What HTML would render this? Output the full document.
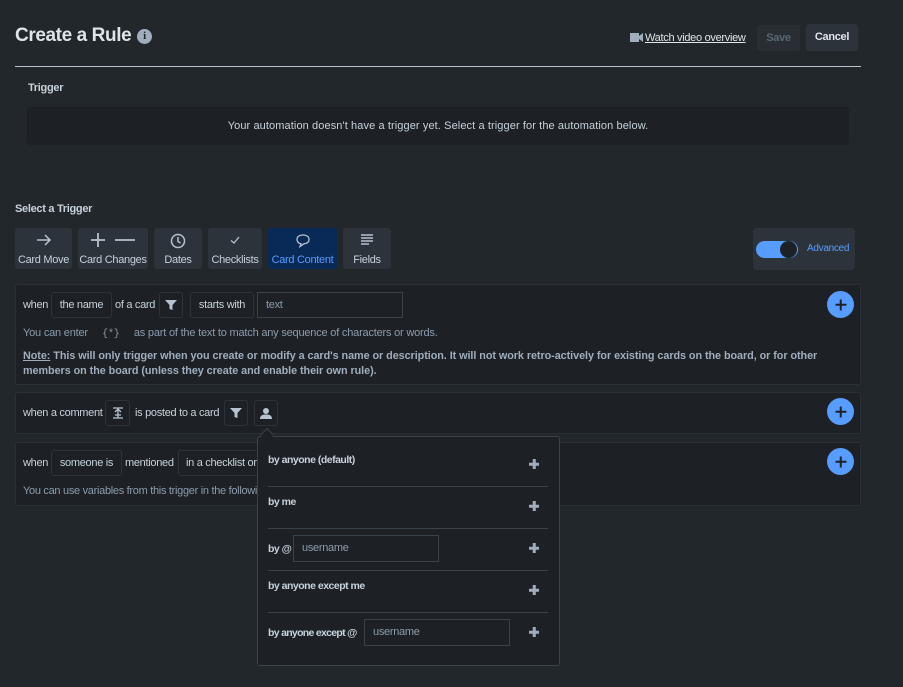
<!DOCTYPE html>
<html><head><meta charset="utf-8"><style>
*{box-sizing:border-box;margin:0;padding:0}
body{width:903px;height:687px;background:#22272b;font-family:"Liberation Sans",sans-serif;color:#b6c2cf;position:relative;overflow:hidden;font-size:11px;letter-spacing:-0.3px}
.a{position:absolute;white-space:nowrap}
.btn{position:absolute;background:#2c333a;border-radius:3px;color:#b6c2cf}
.box{position:absolute;background:#1d2125;border:1px solid #2a3036;border-radius:3px}
.chip{position:absolute;border:1px solid #2c333a;border-radius:3px;height:26px;line-height:24px;text-align:center;color:#c7d1db;font-size:11px;white-space:nowrap}
.t{position:absolute;color:#c7d1db;font-size:11px;white-space:nowrap}
.plus{position:absolute;width:27px;height:27px;border-radius:50%;background:#579dff}
.plus:before,.plus:after{content:"";position:absolute;background:#1d2125;left:50%;top:50%;transform:translate(-50%,-50%)}
.plus:before{width:11px;height:2.5px}.plus:after{width:2.5px;height:11px}
.sp{position:absolute;width:10px;height:10px}
.sp:before,.sp:after{content:"";position:absolute;background:#9fadbc;left:50%;top:50%;transform:translate(-50%,-50%)}
.sp:before{width:10px;height:2.5px}.sp:after{width:2.5px;height:10px}
.tb{position:absolute;top:228px;height:41px;background:#2c333a;border-radius:3px;text-align:center;font-size:11px;color:#c7d1db;white-space:nowrap}
.tb .l{position:absolute;bottom:3px;left:0;right:0}
.tb svg{position:absolute;top:5px;left:50%;transform:translateX(-50%)}
.inp{position:absolute;border:1px solid #3a424b;background:#1d2125;height:26px;line-height:24px;padding-left:8px;color:#8c9bab;font-size:11px}
.hr{position:absolute;left:268px;width:280px;height:1px;background:#3a424b}
.pb{position:absolute;left:268px;font-weight:bold;font-size:10.5px;color:#c7d1db;white-space:nowrap;letter-spacing:-0.5px}
</style></head><body>
<div class="a" style="left:15px;top:25px;font-size:19px;font-weight:bold;color:#dee4ea;letter-spacing:-0.4px">Create a Rule</div>
<div class="a" style="left:137px;top:29px;width:15px;height:15px;border-radius:50%;background:#9fadbc;color:#22272b;font-size:11px;font-weight:bold;text-align:center;line-height:15px;font-family:'Liberation Serif',serif">i</div>
<svg class="a" style="left:630px;top:33px" width="13" height="9"><rect x="0" y="0" width="9" height="9" fill="#9fadbc"/><path d="M9 3 L13 0 V9 L9 6Z" fill="#9fadbc"/></svg>
<div class="a" style="left:645px;top:32px;font-size:11px;color:#dee4ea;text-decoration:underline">Watch video overview</div>
<div class="btn" style="left:757px;top:25px;width:43px;height:26px;line-height:26px;text-align:center;color:#596773;font-weight:bold;font-size:11px;background:#282e33">Save</div>
<div class="btn" style="left:806px;top:24px;width:52px;height:27px;line-height:27px;text-align:center;color:#dee4ea;font-weight:bold;font-size:11px">Cancel</div>
<div class="a" style="left:15px;top:66px;width:846px;height:1px;background:#b6c2cf"></div>
<div class="a" style="left:28px;top:82px;font-weight:bold;font-size:11px;color:#c7d1db">Trigger</div>
<div class="a" style="left:27px;top:107px;width:822px;height:38px;background:#1d2125;border-radius:3px;text-align:center;line-height:38px;color:#c7d1db;font-size:11px;letter-spacing:0.1px">Your automation doesn't have a trigger yet. Select a trigger for the automation below.</div>
<div class="a" style="left:15px;top:203px;font-weight:bold;font-size:11px;color:#c7d1db">Select a Trigger</div>

<div class="tb" style="left:15px;width:57px"><svg width="16" height="14"><path d="M1 7H14M9 2L14 7L9 12" stroke="#b6c2cf" stroke-width="1.5" fill="none"/></svg><div class="l">Card Move</div></div>
<div class="tb" style="left:78px;width:70px"><svg width="48" height="14"><path d="M2 7H16M9 0V14M26 7H46" stroke="#b6c2cf" stroke-width="1.8" fill="none"/></svg><div class="l">Card Changes</div></div>
<div class="tb" style="left:154px;width:48px"><svg width="16" height="16"><circle cx="8" cy="8" r="6.5" stroke="#b6c2cf" stroke-width="1.5" fill="none"/><path d="M8 4V8.5L10.5 10" stroke="#b6c2cf" stroke-width="1.5" fill="none"/></svg><div class="l">Dates</div></div>
<div class="tb" style="left:208px;width:54px"><svg width="14" height="14"><path d="M3 7.5L6 10L11 4" stroke="#b6c2cf" stroke-width="1.3" fill="none"/></svg><div class="l">Checklists</div></div>
<div class="tb" style="left:268px;width:69px;background:#092957;color:#579dff"><svg width="16" height="15"><path d="M8 2C4 2 2 4 2 6.5C2 9 4 10.5 6 10.8L5 13.5L9 10.8C12 10.5 14 9 14 6.5C14 4 12 2 8 2Z" stroke="#b6c2cf" stroke-width="1.3" fill="none"/></svg><div class="l">Card Content</div></div>
<div class="tb" style="left:343px;width:48px"><svg width="16" height="14"><path d="M2 2H14M2 5H14M2 8H14M2 11H10" stroke="#b6c2cf" stroke-width="1.4" fill="none"/></svg><div class="l">Fields</div></div>

<div class="a" style="left:753px;top:228px;width:102px;height:42px;background:#2c333a;border-radius:3px"></div>
<div class="a" style="left:756px;top:241px;width:42px;height:17px;border-radius:9px;background:#579dff"></div>
<div class="a" style="left:780px;top:241px;width:17px;height:17px;border-radius:50%;background:#1d2125"></div>
<div class="a" style="left:807px;top:243px;color:#579dff;font-size:10px">Advanced</div>

<div class="box" style="left:15px;top:284px;width:846px;height:101px"></div>
<div class="t" style="left:23px;top:299px">when</div>
<div class="chip" style="left:51px;top:292px;width:61px">the name</div>
<div class="t" style="left:115px;top:299px">of a card</div>
<div class="chip" style="left:159px;top:292px;width:24px"><svg width="12" height="12" style="margin-top:6px"><path d="M0 1H12L7.5 6V11L4.5 10V6Z" fill="#b6c2cf"/></svg></div>
<div class="chip" style="left:190px;top:292px;width:64px">starts with</div>
<div class="inp" style="left:257px;top:292px;width:146px">text</div>
<div class="plus" style="left:827px;top:291px"></div>
<div class="t" style="left:23px;top:327px;color:#8c9bab;letter-spacing:-0.2px">You can enter &nbsp;&nbsp;&nbsp;&nbsp;<span style="font-family:'Liberation Mono',monospace;font-size:10px">{*}</span>&nbsp;&nbsp;&nbsp;&nbsp; as part of the text to match any sequence of characters or words.</div>
<div class="t" style="left:23px;top:349px;font-weight:bold;color:#9fadbc;line-height:15px;font-size:10.8px;letter-spacing:-0.05px"><u>Note:</u> This will only trigger when you create or modify a card's name or description. It will not work retro-actively for existing cards on the board, or for other<br>members on the board (unless they create and enable their own rule).</div>

<div class="box" style="left:15px;top:392px;width:846px;height:42px"></div>
<div class="t" style="left:23px;top:407px">when a comment</div>
<div class="chip" style="left:105px;top:400px;width:25px"><svg width="12" height="12" style="margin-top:6px"><path d="M1 1H11M1 11H11M6 1V11M3 5L6 2L9 5M3 8H9" stroke="#b6c2cf" stroke-width="1.3" fill="none"/></svg></div>
<div class="t" style="left:135px;top:407px">is posted to a card</div>
<div class="chip" style="left:224px;top:400px;width:24px"><svg width="12" height="12" style="margin-top:6px"><path d="M0 1H12L7.5 6V11L4.5 10V6Z" fill="#b6c2cf"/></svg></div>
<div class="chip" style="left:254px;top:400px;width:24px"><svg width="12" height="12" style="margin-top:6px"><circle cx="6" cy="4" r="3" fill="#b6c2cf"/><path d="M0 12C0 8 3 7.5 6 7.5S12 8 12 12Z" fill="#b6c2cf"/></svg></div>
<div class="plus" style="left:827px;top:398px"></div>

<div class="box" style="left:15px;top:442px;width:846px;height:64px"></div>
<div class="t" style="left:23px;top:457px">when</div>
<div class="chip" style="left:51px;top:450px;width:71px">someone is</div>
<div class="t" style="left:125px;top:457px">mentioned</div>
<div class="chip" style="left:178px;top:450px;width:90px;text-align:left;padding-left:7px;overflow:hidden">in a checklist or</div>
<div class="t" style="left:23px;top:485px;color:#8c9bab">You can use variables from this trigger in the following</div>
<div class="plus" style="left:827px;top:448px"></div>

<div class="a" style="left:257px;top:436px;width:303px;height:230px;background:#1d2125;border:1px solid #3a424b;border-radius:3px"></div>
<div class="a" style="left:262px;top:430px;width:10px;height:10px;background:#1d2125;border-left:1px solid #3a424b;border-top:1px solid #3a424b;transform:rotate(45deg)"></div>
<div class="pb" style="top:454px">by anyone (default)</div><div class="sp" style="left:529px;top:459px"></div>
<div class="hr" style="top:486px"></div>
<div class="pb" style="top:496px">by me</div><div class="sp" style="left:529px;top:501px"></div>
<div class="hr" style="top:528px"></div>
<div class="pb" style="top:543px">by @</div><div class="inp" style="left:293px;top:535px;width:146px;height:27px">username</div><div class="sp" style="left:529px;top:543px"></div>
<div class="hr" style="top:570px"></div>
<div class="pb" style="top:580px">by anyone except me</div><div class="sp" style="left:529px;top:585px"></div>
<div class="hr" style="top:612px"></div>
<div class="pb" style="top:627px;letter-spacing:-0.7px">by anyone except @</div><div class="inp" style="left:364px;top:619px;width:146px;height:27px">username</div><div class="sp" style="left:529px;top:627px"></div>
</body></html>
